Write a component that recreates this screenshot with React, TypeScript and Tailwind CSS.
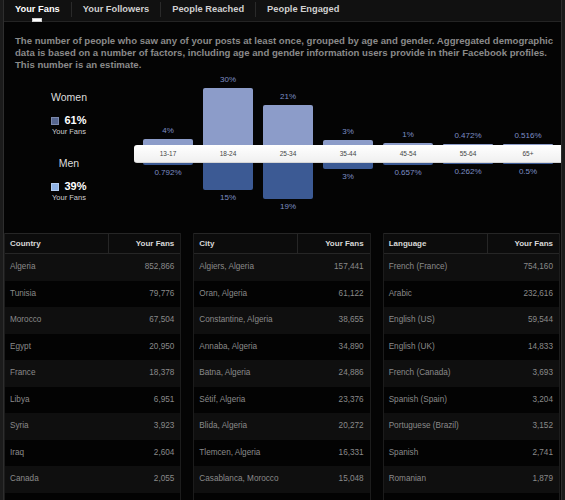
import React from "react";

const tabs = ["Your Fans", "Your Followers", "People Reached", "People Engaged"];

const ages = [
  { label: "13-17", top: "4%", topH: 6, bottom: "0.792%", bottomH: 2 },
  { label: "18-24", top: "30%", topH: 57, bottom: "15%", bottomH: 27 },
  { label: "25-34", top: "21%", topH: 40, bottom: "19%", bottomH: 36 },
  { label: "35-44", top: "3%", topH: 5, bottom: "3%", bottomH: 6 },
  { label: "45-54", top: "1%", topH: 2, bottom: "0.657%", bottomH: 2 },
  { label: "55-64", top: "0.472%", topH: 1, bottom: "0.262%", bottomH: 1 },
  { label: "65+", top: "0.516%", topH: 1, bottom: "0.5%", bottomH: 1 },
];

const tables = [
  {
    title: "Country",
    rows: [
      ["Algeria", "852,866"],
      ["Tunisia", "79,776"],
      ["Morocco", "67,504"],
      ["Egypt", "20,950"],
      ["France", "18,378"],
      ["Libya", "6,951"],
      ["Syria", "3,923"],
      ["Iraq", "2,604"],
      ["Canada", "2,055"],
    ],
  },
  {
    title: "City",
    rows: [
      ["Algiers, Algeria", "157,441"],
      ["Oran, Algeria", "61,122"],
      ["Constantine, Algeria", "38,655"],
      ["Annaba, Algeria", "34,890"],
      ["Batna, Algeria", "24,886"],
      ["Sétif, Algeria", "23,376"],
      ["Blida, Algeria", "20,272"],
      ["Tlemcen, Algeria", "16,331"],
      ["Casablanca, Morocco", "15,048"],
    ],
  },
  {
    title: "Language",
    rows: [
      ["French (France)", "754,160"],
      ["Arabic", "232,616"],
      ["English (US)", "59,544"],
      ["English (UK)", "14,833"],
      ["French (Canada)", "3,693"],
      ["Spanish (Spain)", "3,204"],
      ["Portuguese (Brazil)", "3,152"],
      ["Spanish", "2,741"],
      ["Romanian", "1,879"],
    ],
  },
];

function DataTable({ title, rows }: { title: string; rows: string[][] }) {
  return (
    <div className="flex flex-col border-x border-[#1c1c1c]">
      <div className="flex h-[21px] border-y border-[#262626] bg-[#0c0c0c] text-[8px] font-bold text-[#d8d8d8]">
        <div className="flex w-[104px] items-center border-r border-[#262626] pl-[5px]">{title}</div>
        <div className="flex flex-1 items-center justify-end pr-[6px]">Your Fans</div>
      </div>
      {rows.map((r, i) => (
        <div
          key={r[0]}
          className={`flex h-[26.5px] items-center justify-between pl-[5px] pr-[6px] text-[8.2px] text-[#8a8a8a] ${
            i % 2 === 0 ? "bg-[#0f0f0f]" : "bg-[#030303]"
          }`}
        >
          <span>{r[0]}</span>
          <span>{r[1]}</span>
        </div>
      ))}
      <div className="h-[26.5px] bg-[#030303]" />
    </div>
  );
}

export default function App() {
  return (
    <div
      className="h-[500px] w-[565px] overflow-hidden bg-[#1b1b1b] pl-[3px]"
      style={{ fontFamily: '"Liberation Sans", Arial, sans-serif' }}
    >
      <div className="h-full w-[559px] border-x border-[#2e2e2e] bg-[#040404]">
        {/* Tabs */}
        <div className="relative flex h-[22px] items-start border-b border-[#242424] bg-[#111111]">
          {tabs.map((t, i) => (
            <React.Fragment key={t}>
              {i > 0 && <div className="mt-[2px] h-[15px] w-px bg-[#2a2a2a]" />}
              <div
                className={`relative px-[11px] pt-[3px] text-[9.3px] font-bold leading-[12px] ${
                  i === 0 ? "text-white" : "text-[#d0d0d0]"
                }`}
              >
                {t}
                {i === 0 && (
                  <div className="absolute left-[28px] top-[18px] h-[4px] w-[10px] border border-[#cfcfcf] bg-white" />
                )}
              </div>
            </React.Fragment>
          ))}
        </div>

        {/* Description */}
        <p className="whitespace-nowrap pl-[11px] pt-[13px] text-[9.6px] font-bold leading-[12px] text-[#8a8a8a]">
          The number of people who saw any of your posts at least once, grouped by age and gender. Aggregated demographic
          <br />
          data is based on a number of factors, including age and gender information users provide in their Facebook profiles.
          <br />
          This number is an estimate.
        </p>

        {/* Chart */}
        <div className="mt-[3px] flex">
          <div className="flex w-[130px] flex-col items-center">
            <div className="mt-[16px] text-[10.5px] leading-[14px] text-[#dcdcdc]">Women</div>
            <div className="mt-[10px] flex items-center gap-[5px]">
              <div className="h-[8px] w-[8px] border border-[#7b89ad] bg-[#56668f]" />
              <span className="text-[11px] font-bold leading-[13px] text-white">61%</span>
            </div>
            <div className="text-[7.5px] leading-[9px] text-[#cfcfcf]">Your Fans</div>
            <div className="mt-[20px] text-[10.5px] leading-[14px] text-[#dcdcdc]">Men</div>
            <div className="mt-[10px] flex items-center gap-[5px]">
              <div className="h-[8px] w-[8px] border border-[#b3cdf0] bg-[#8fb3e6]" />
              <span className="text-[11px] font-bold leading-[13px] text-white">39%</span>
            </div>
            <div className="text-[7.5px] leading-[9px] text-[#cfcfcf]">Your Fans</div>
          </div>

          <div className="flex flex-1 flex-col">
            <div className="flex h-[71px] pl-[4px]">
              {ages.map((a) => (
                <div key={a.label} className="flex w-[60px] flex-col items-center justify-end gap-[2px]">
                  <span className="text-[8px] leading-[12px] text-[#7d8ec4]">{a.top}</span>
                  <div className="w-[50px] rounded-t-[2px] bg-[#8c9cc9]" style={{ height: a.topH }} />
                </div>
              ))}
            </div>
            <div className="flex h-[18px] rounded-l-[3px] border-b border-[#d6d6d6] bg-gradient-to-b from-white to-[#f0f0f0] pl-[4px]">
              {ages.map((a) => (
                <div key={a.label} className="flex w-[60px] items-center justify-center text-[6.5px] text-[#444444]">
                  {a.label}
                </div>
              ))}
            </div>
            <div className="flex h-[50px] pl-[4px]">
              {ages.map((a) => (
                <div key={a.label} className="flex w-[60px] flex-col items-center gap-[2px]">
                  <div className="w-[50px] rounded-b-[2px] bg-[#3c5a94]" style={{ height: a.bottomH }} />
                  <span className="text-[8px] leading-[12px] text-[#7d8ec4]">{a.bottom}</span>
                </div>
              ))}
            </div>
          </div>
        </div>

        {/* Tables */}
        <div className="mt-[20px] grid grid-cols-3 gap-[12px] pr-[1px]">
          {tables.map((t) => (
            <DataTable key={t.title} title={t.title} rows={t.rows} />
          ))}
        </div>
      </div>
    </div>
  );
}
